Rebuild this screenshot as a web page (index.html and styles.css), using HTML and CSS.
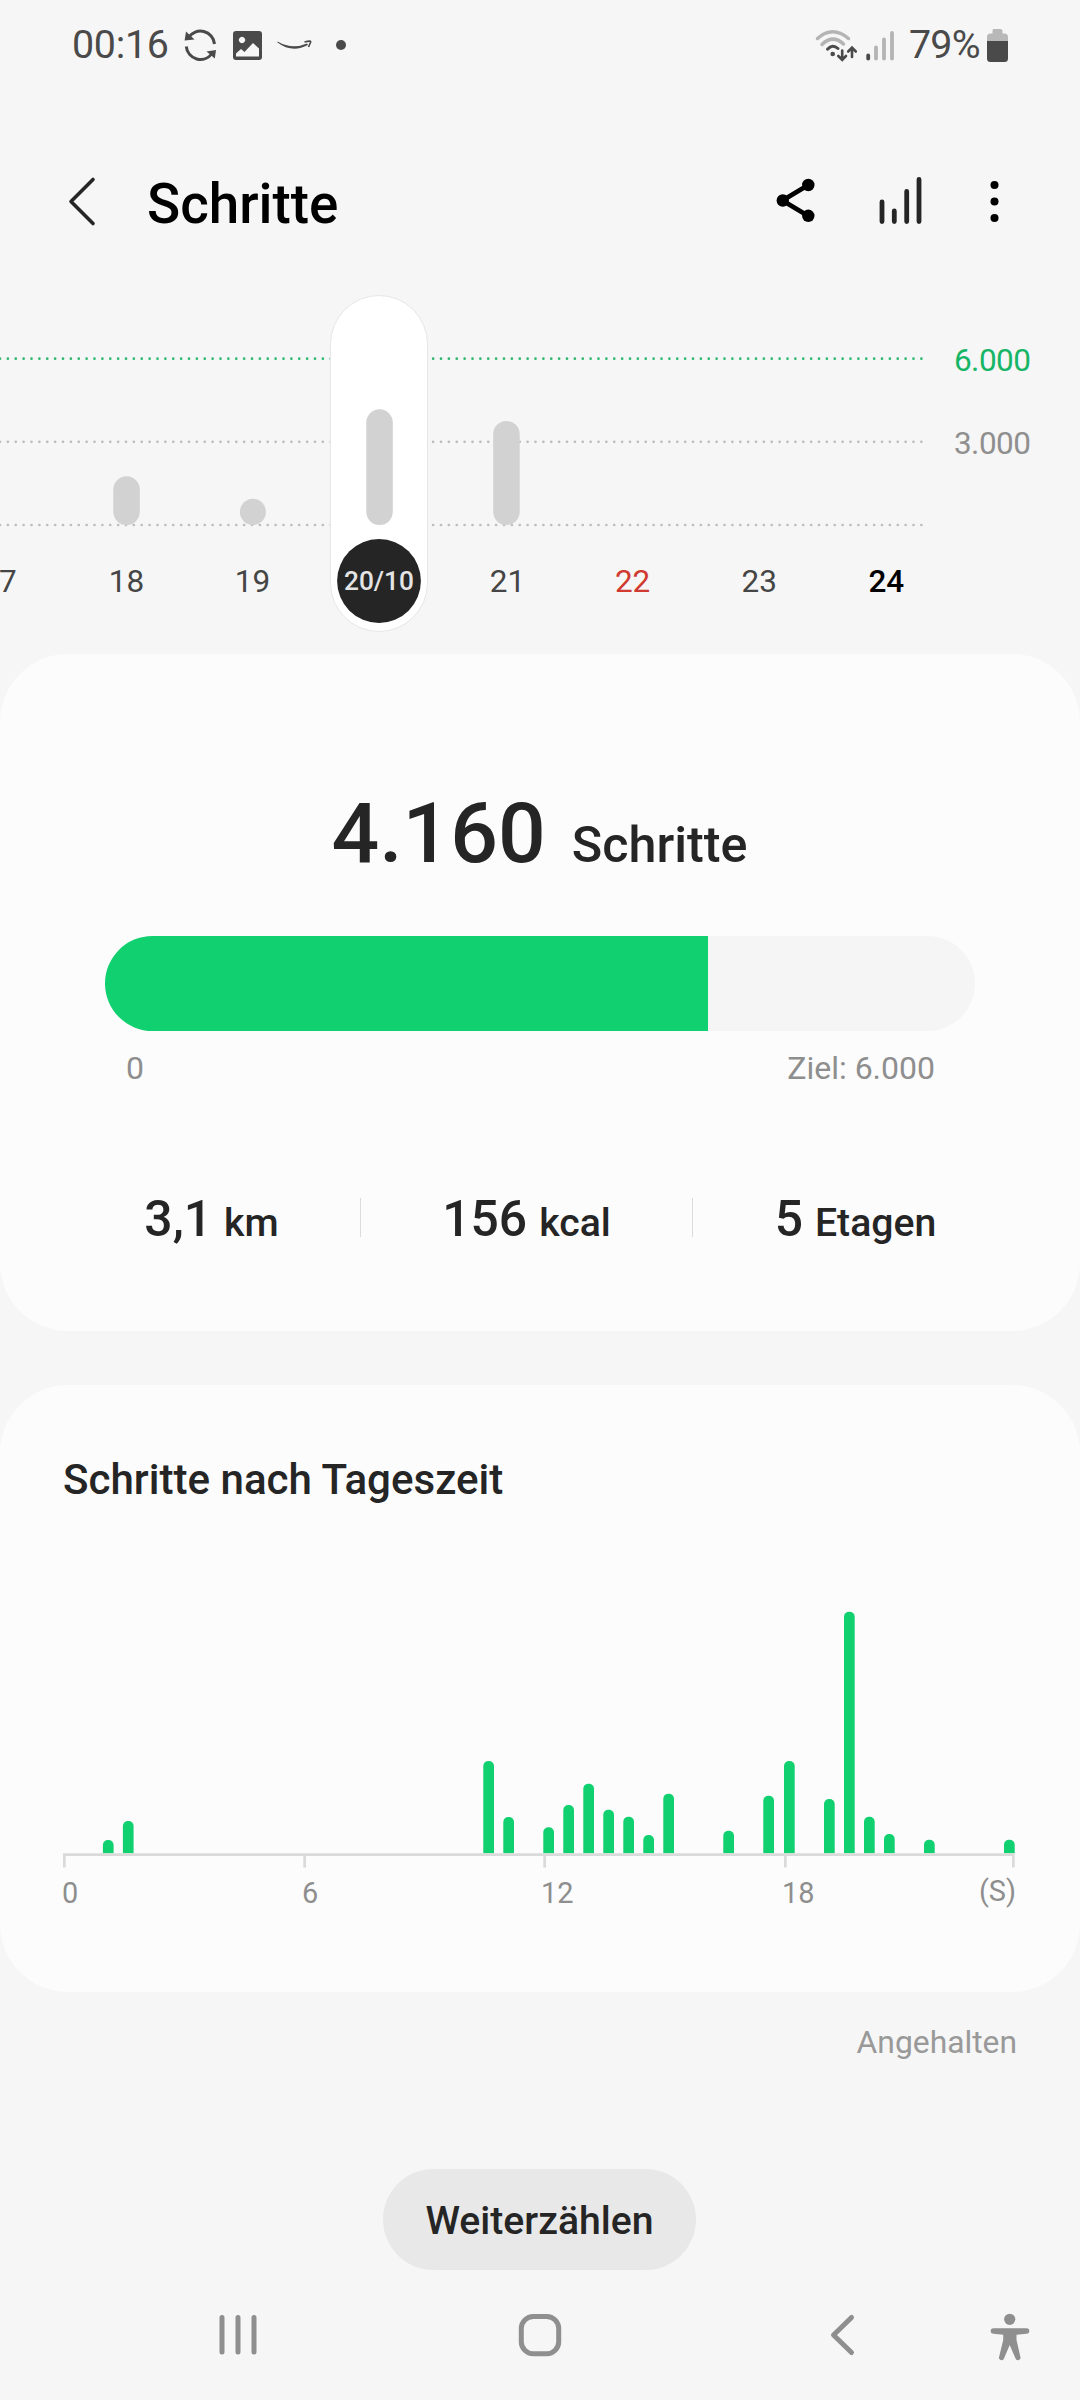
FILE: index.html
```html
<!DOCTYPE html>
<html lang="de">
<head>
<meta charset="utf-8">
<title>Schritte</title>
<link rel="stylesheet" href="styles.css">
</head>
<body>
<div class="screen">
  <div class="status-bar">
    <span class="clock">00:16</span>
    <svg class="status-icons-left" width="170" height="88" viewBox="180 0 170 88">
      <g fill="none" stroke="#4a4a4a" stroke-width="3">
        <path d="M188.500 37.500A14.200 14.200 0 0 1 214.500 44"/>
        <path d="M212 53.500A14.200 14.200 0 0 1 186.300 46.500"/>
      </g>
      <path fill="#4a4a4a" d="M186 31.500L184.600 40.500L194.500 39.500ZM214.800 58.500L216 50L206.500 51.500Z"/>
      <path fill="#4a4a4a" fill-rule="evenodd" d="M236 31h23a3 3 0 0 1 3 3v23a3 3 0 0 1-3 3h-23a3 3 0 0 1-3-3v-23a3 3 0 0 1 3-3ZM236 56.500h23v-8l-6-5.500-8.500 9-3.500-3-5 4.500ZM242 36.800a3.200 3.200 0 1 0 .01 0Z"/>
      <path fill="#4a4a4a" d="M277.500 41.500Q292 50 307 43.500L308 45Q292 53.500 277.500 42.500Z"/>
      <path fill="none" stroke="#4a4a4a" stroke-width="1.600" d="M304.500 42Q312 40 310.500 42.500L308.500 47"/>
      <circle cx="341" cy="45" r="5" fill="#4a4a4a"/>
    </svg>
    <svg class="status-icons-right" width="82" height="88" viewBox="814 0 82 88" fill="none" stroke-linecap="round">
      <path stroke="#b4b4b4" stroke-width="3.500" d="M817.500 38.500Q832.500 25 848.500 38.500M822 44.500Q832.500 34 843.500 44"/>
      <path stroke="#4a4a4a" stroke-width="3" d="M827.500 49.200Q832.500 43.500 838 48.500"/>
      <circle cx="832.700" cy="54" r="2.300" fill="#4a4a4a"/>
      <path stroke="#4a4a4a" stroke-width="2.600" d="M842.200 50.500V59.500M838.300 56L842.200 59.800L846 56M852 57V48M848.200 51.500L852 47.700L855.800 51.500"/>
      <path stroke="#4a4a4a" stroke-width="3.800" d="M868.200 55.500V58.500"/>
      <path stroke="#b4b4b4" stroke-width="3.800" d="M876 47.500V58.500M884 39.500V58.500M892 33V58.500"/>
    </svg>
    <span class="battery-level">79%</span>
    <svg class="battery" width="22" height="88" viewBox="987 0 22 88">
      <path fill="#b8b8b8" d="M994.500 29h6a2 2 0 0 1 2 2v2.500h2a3.500 3.500 0 0 1 3.500 3.500v6h-21v-6a3.500 3.500 0 0 1 3.500-3.500h2v-2.500a2 2 0 0 1 1-2Z"/>
      <path fill="#4a4a4a" d="M987 41h21v17.500a3.500 3.500 0 0 1-3.500 3.500h-14a3.500 3.500 0 0 1-3.500-3.500Z"/>
    </svg>
  </div>

  <header class="app-bar">
    <svg class="back" width="30" height="60" viewBox="66 172 30 60" fill="none" stroke="#252525" stroke-width="3.600" stroke-linecap="round" stroke-linejoin="round"><path d="M93 179.500L71 201.500L93 223.500"/></svg>
    <h1 class="title">Schritte</h1>
    <svg class="actions" width="230" height="60" viewBox="770 172 230 60">
      <path d="M808.300 185L782.500 200.500L808.300 216" fill="none" stroke="#000" stroke-width="4.800"/>
      <circle cx="782.800" cy="200.500" r="6.200"/><circle cx="808.300" cy="185" r="6.200"/><circle cx="808.300" cy="215.800" r="6.200"/>
      <path d="M882 202V221.500M894.300 211V221.500M906.700 191.500V221.500M919 179.500V221.500" fill="none" stroke="#252525" stroke-width="4.800" stroke-linecap="round"/>
      <circle cx="994.500" cy="185" r="4"/><circle cx="994.500" cy="201.500" r="4"/><circle cx="994.500" cy="218" r="4"/>
    </svg>
  </header>

  <svg class="history" width="1080" height="370" viewBox="0 284 1080 370">
    <g class="grid-lines">
      <path class="goal-line" d="M0 358.700H922"/>
      <path d="M0 441.800H922M0 525H922"/>
    </g>
    <rect class="selected-day" x="330.500" y="295.500" width="97" height="336" rx="48.500"/>
    <g class="day-bars">
      <rect x="113.300" y="476.300" width="26.500" height="48.700" rx="13.200"/>
      <rect x="239.900" y="498.700" width="26" height="26.300" rx="13"/>
      <rect x="366.300" y="409.300" width="26.500" height="115.700" rx="13.200"/>
      <rect x="493.200" y="421" width="26.500" height="104" rx="13.200"/>
    </g>
    <circle class="selected-dot" cx="379" cy="581" r="41.900"/>
    <g class="days">
      <text x="-1" y="592">17</text>
      <text x="126.500" y="592">18</text>
      <text x="252.500" y="592">19</text>
      <text class="day-selected" x="379" y="590.300">20/10</text>
      <text x="507.500" y="592">21</text>
      <text class="day-sunday" x="632.600" y="592">22</text>
      <text x="759.300" y="592">23</text>
      <text class="day-today" x="886.300" y="592">24</text>
    </g>
    <text class="scale scale-goal" x="1030.500" y="371">6.000</text>
    <text class="scale" x="1030.500" y="454">3.000</text>
  </svg>

  <main class="cards">
    <section class="card summary">
      <div class="total"><span class="total-value">4.160</span><span class="total-unit">Schritte</span></div>
      <div class="progress"><div class="progress-fill" style="width:69.33%"></div></div>
      <div class="range"><span>0</span><span>Ziel: 6.000</span></div>
      <div class="stats">
        <div class="stat"><b>3,1</b><span>km</span></div>
        <div class="stat"><b>156</b><span>kcal</span></div>
        <div class="stat"><b>5</b><span>Etagen</span></div>
      </div>
    </section>

    <section class="card hourly">
      <h2 class="card-title">Schritte nach Tageszeit</h2>
      <svg class="hour-chart" width="960" height="320" viewBox="60 1600 960 320">
        <defs><clipPath id="plot"><rect x="60" y="1600" width="960" height="253.200"/></clipPath></defs>
        <g class="hour-bars" clip-path="url(#plot)">
          <rect x="102.900" y="1840" width="10.700" height="40" rx="5"/>
          <rect x="122.900" y="1821" width="10.700" height="40" rx="5"/>
          <rect x="483.300" y="1761" width="10.700" height="100" rx="5"/>
          <rect x="503.300" y="1817" width="10.700" height="40" rx="5"/>
          <rect x="543.300" y="1827.300" width="10.700" height="40" rx="5"/>
          <rect x="563.300" y="1805" width="10.700" height="60" rx="5"/>
          <rect x="583.300" y="1783.700" width="10.700" height="80" rx="5"/>
          <rect x="603.300" y="1809.700" width="10.700" height="60" rx="5"/>
          <rect x="623.300" y="1816.700" width="10.700" height="60" rx="5"/>
          <rect x="643.300" y="1835" width="10.700" height="40" rx="5"/>
          <rect x="663.300" y="1793.700" width="10.700" height="80" rx="5"/>
          <rect x="723.300" y="1830.700" width="10.700" height="40" rx="5"/>
          <rect x="763.300" y="1795.700" width="10.700" height="80" rx="5"/>
          <rect x="784" y="1761" width="10.700" height="100" rx="5"/>
          <rect x="824" y="1799" width="10.700" height="80" rx="5"/>
          <rect x="844" y="1611.700" width="10.700" height="260" rx="5"/>
          <rect x="864" y="1816.700" width="10.700" height="60" rx="5"/>
          <rect x="884" y="1834" width="10.700" height="40" rx="5"/>
          <rect x="924" y="1839.700" width="10.700" height="40" rx="5"/>
          <rect x="1004" y="1839.700" width="10.700" height="40" rx="5"/>
        </g>
        <path class="axis" d="M63 1853.200H1014.700V1867.600H1012V1855.900H786.700V1867.600H784V1855.900H546V1867.600H543.300V1855.900H306V1867.600H303.300V1855.900H65.700V1867.600H63Z"/>
        <g class="hour-labels">
          <text x="62" y="1903.300">0</text>
          <text x="302" y="1903.300">6</text>
          <text x="541" y="1903.300">12</text>
          <text x="782" y="1903.300">18</text>
          <text class="hour-unit" x="1016" y="1901">(S)</text>
        </g>
      </svg>
    </section>
  </main>

  <p class="paused">Angehalten</p>
  <button class="resume">Weiterzählen</button>

  <nav class="nav-bar">
    <svg width="1080" height="70" viewBox="0 2300 1080 70" fill="none" stroke="#8f8f8f" stroke-width="5" stroke-linecap="round" stroke-linejoin="round">
      <path d="M222 2317.500V2352M238 2317.500V2352M254 2317.500V2352"/>
      <rect x="521.300" y="2316.500" width="37.400" height="37.200" rx="12"/>
      <path d="M851.500 2317.500L833.500 2335L851.500 2352.500"/>
      <g fill="#8f8f8f" stroke="none">
        <circle cx="1009.700" cy="2319.300" r="5.600"/>
        <path d="M993.500 2328.200H1026.500A2.700 2.700 0 0 1 1026.500 2333.800L1016.500 2334.700V2340L1020.300 2356.500A2.500 2.500 0 0 1 1015.500 2358.500L1009.700 2345L1004 2358.500A2.500 2.500 0 0 1 999.200 2356.500L1003.200 2340V2334.700L993.500 2333.800A2.700 2.700 0 0 1 993.500 2328.200Z"/>
      </g>
    </svg>
  </nav>
</div>
</body>
</html>
```
FILE: styles.css
```css
* { box-sizing: border-box; }

body {
  margin: 0;
  background: #f6f6f6;
  color: #252525;
  font-family: Roboto, "Liberation Sans", sans-serif;
}

h1, h2, p { margin: 0; font-weight: 500; }
svg { display: block; flex: none; }

.screen {
  width: 1080px;
  height: 2400px;
  overflow: hidden;
  display: flex;
  flex-direction: column;
}

/* Status bar */
.status-bar {
  height: 88px;
  padding: 0 71px 0 72px;
  display: flex;
  align-items: center;
  flex: none;
  color: #4a4a4a;
  font-size: 39.4px;
  line-height: 88px;
}
.clock { width: 108px; padding-top: 2px; letter-spacing: -0.3px; }
.status-icons-right { margin-left: auto; }
.battery-level { width: 76px; margin-left: 13px; padding-top: 2px; white-space: nowrap; letter-spacing: -0.8px; }
.battery { margin-left: 2px; }

/* App bar */
.app-bar {
  height: 196px;
  padding: 44px 80px 0 66px;
  display: flex;
  align-items: center;
  flex: none;
  color: #000;
}
.app-bar svg { margin-bottom: 12px; }
.title { margin-left: 51px; margin-bottom: 8px; font-size: 54.8px; line-height: 64px; }
.actions { margin-left: auto; }

/* Daily history */
.history { overflow: hidden; }
.grid-lines path {
  fill: none;
  stroke: #bdbdbd;
  stroke-width: 2.7;
  stroke-linecap: round;
  stroke-dasharray: 0 7.875;
}
.grid-lines .goal-line { stroke: #2eb872; }
.selected-day { fill: #fff; stroke: #e6e6e6; }
.day-bars { fill: #d2d2d2; }
.selected-dot { fill: #252525; }
.days text { font-size: 31.5px; text-anchor: middle; fill: #454545; }
.days .day-selected { font-size: 26.25px; font-weight: 500; fill: #e4e4e4; }
.days .day-sunday { fill: #d03a30; }
.days .day-today { font-weight: 500; fill: #000; }
.scale { font-size: 31.5px; letter-spacing: -0.5px; text-anchor: end; fill: #8f8f8f; }
.scale-goal { fill: #17b566; }

/* Cards */
.cards { display: flex; flex-direction: column; gap: 54px; flex: none; }
.card { background: #fcfcfc; border-radius: 68px; }

.summary { height: 677px; padding-top: 130px; }
.total { height: 100px; padding-right: 1px; display: flex; justify-content: center; align-items: baseline; font-weight: 500; }
.total-value { font-size: 84px; line-height: 100px; }
.total-unit { margin-left: 26px; font-size: 50.3px; }
.progress {
  height: 95px;
  margin: 52px 105px 0;
  border-radius: 48px;
  background: #f5f5f5;
  overflow: hidden;
}
.progress-fill { height: 100%; background: #11d06f; }
.range {
  margin: 18px 145px 0 126px;
  display: flex;
  justify-content: space-between;
  color: #8e8e8e;
  font-size: 32px;
  line-height: 38px;
}
.stats {
  margin: 111px 62px 0;
  display: grid;
  grid-template-columns: 298px 332px 326px;
  font-weight: 500;
}
.stat {
  height: 40px;
  display: flex;
  justify-content: center;
  align-items: baseline;
  line-height: 43px;
  position: relative;
}
.stat + .stat::before {
  content: "";
  position: absolute;
  left: 0;
  top: 0;
  width: 1px;
  height: 39px;
  background: #dcdcdc;
}
.stat b { padding-left: 1px; font-size: 49.8px; font-weight: 500; }
.stat span { margin-left: 12px; font-size: 39.2px; }

.hourly { height: 607px; padding: 70px 60px 0; }
.card-title { padding-left: 3px; font-size: 42.1px; line-height: 50px; }
.hour-chart { margin-top: 95px; }
.hour-bars { fill: #11d06f; }
.axis { fill: #dadada; }
.hour-labels text { font-size: 28.9px; fill: #8e8e8e; }
.hour-labels .hour-unit { text-anchor: end; }

/* Footer */
.paused {
  margin: 30px 63px 0 0;
  color: #999;
  font-size: 31.8px;
  font-weight: 400;
  line-height: 40px;
  text-align: right;
}
.resume {
  align-self: center;
  width: 313px;
  height: 101px;
  margin: 107px 1px 0 0;
  padding: 4px 0 0;
  border: 0;
  border-radius: 51px;
  background: #e8e8e8;
  color: #252525;
  font: 500 39.2px/1.2 Roboto, "Liberation Sans", sans-serif;
}
.nav-bar { margin-top: 30px; }
```
